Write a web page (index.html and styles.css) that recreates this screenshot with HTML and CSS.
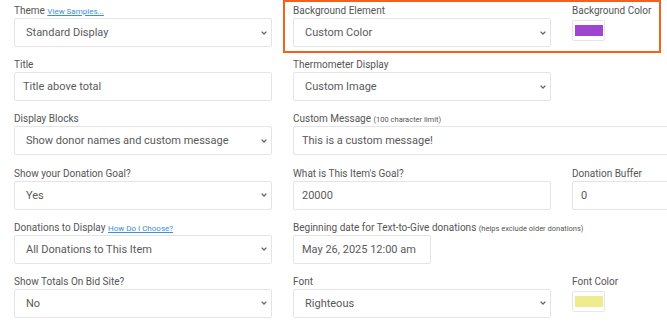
FILE: index.html
```html
<!DOCTYPE html>
<html>
<head>
    <meta charset="UTF-8">
    <meta name="viewport" content="width=device-width, initial-scale=1.0">
    <title>Thermometer Settings</title>
    <link rel="stylesheet" href="styles.css">
</head>
<body>
    <form class="settings">
        <!-- row 1 -->
        <div class="field">
            <label>Theme <a href="#">View Samples...</a></label>
            <div class="select"><span>Standard Display</span>
                <svg width="6" height="4" viewBox="0 0 6 4"><path d="M0.6 0.6 L3 3 L5.4 0.6" fill="none" stroke="#666" stroke-width="1.3"/></svg>
            </div>
        </div>
        <div class="highlight">
            <div class="field">
                <label>Background Element</label>
                <div class="select"><span>Custom Color</span>
                    <svg width="6" height="4" viewBox="0 0 6 4"><path d="M0.6 0.6 L3 3 L5.4 0.6" fill="none" stroke="#666" stroke-width="1.3"/></svg>
                </div>
            </div>
            <div class="field">
                <label>Background Color</label>
                <div class="swatch"><span class="swatch-fill purple"></span></div>
            </div>
        </div>

        <!-- row 2 -->
        <div class="field">
            <label>Title</label>
            <input type="text" value="Title above total">
        </div>
        <div class="field">
            <label>Thermometer Display</label>
            <div class="select"><span>Custom Image</span>
                <svg width="6" height="4" viewBox="0 0 6 4"><path d="M0.6 0.6 L3 3 L5.4 0.6" fill="none" stroke="#666" stroke-width="1.3"/></svg>
            </div>
        </div>
        <div class="field"></div>

        <!-- row 3 -->
        <div class="field">
            <label>Display Blocks</label>
            <div class="select"><span>Show donor names and custom message</span>
                <svg width="6" height="4" viewBox="0 0 6 4"><path d="M0.6 0.6 L3 3 L5.4 0.6" fill="none" stroke="#666" stroke-width="1.3"/></svg>
            </div>
        </div>
        <div class="field wide">
            <label>Custom Message <small>(100 character limit)</small></label>
            <input type="text" value="This is a custom message!">
        </div>

        <!-- row 4 -->
        <div class="field">
            <label>Show your Donation Goal?</label>
            <div class="select"><span>Yes</span>
                <svg width="6" height="4" viewBox="0 0 6 4"><path d="M0.6 0.6 L3 3 L5.4 0.6" fill="none" stroke="#666" stroke-width="1.3"/></svg>
            </div>
        </div>
        <div class="field">
            <label>What is This Item's Goal?</label>
            <input type="text" value="20000">
        </div>
        <div class="field">
            <label>Donation Buffer</label>
            <input type="text" value="0">
        </div>

        <!-- row 5 -->
        <div class="field">
            <label>Donations to Display <a href="#">How Do I Choose?</a></label>
            <div class="select"><span>All Donations to This Item</span>
                <svg width="6" height="4" viewBox="0 0 6 4"><path d="M0.6 0.6 L3 3 L5.4 0.6" fill="none" stroke="#666" stroke-width="1.3"/></svg>
            </div>
        </div>
        <div class="field wide">
            <label>Beginning date for Text-to-Give donations <small>(helps exclude older donations)</small></label>
            <input type="text" class="date" value="May 26, 2025 12:00 am">
        </div>

        <!-- row 6 -->
        <div class="field">
            <label>Show Totals On Bid Site?</label>
            <div class="select"><span>No</span>
                <svg width="6" height="4" viewBox="0 0 6 4"><path d="M0.6 0.6 L3 3 L5.4 0.6" fill="none" stroke="#666" stroke-width="1.3"/></svg>
            </div>
        </div>
        <div class="field">
            <label>Font</label>
            <div class="select"><span>Righteous</span>
                <svg width="6" height="4" viewBox="0 0 6 4"><path d="M0.6 0.6 L3 3 L5.4 0.6" fill="none" stroke="#666" stroke-width="1.3"/></svg>
            </div>
        </div>
        <div class="field">
            <label>Font Color</label>
            <div class="swatch"><span class="swatch-fill yellow"></span></div>
        </div>
    </form>
</body>
</html>
```

FILE: styles.css
```css
html {
    overflow: hidden;
}
body {
    margin: 0;
    padding: 0;
    background: white;
    font-family: Roboto, "Liberation Sans", Arial, sans-serif;
    color: #5a5a5a;
}
.settings {
    display: grid;
    grid-template-columns: 258px 258px 258px;
    grid-auto-rows: 43px;
    column-gap: 21px;
    row-gap: 11.2px;
    padding: 4px 0 0 14px;
    width: 830px;
}
.field {
    display: flex;
    flex-direction: column;
    min-width: 0;
}
.wide {
    grid-column: 2 / 4;
}
label {
    display: block;
    height: 14px;
    font-size: 10px;
    line-height: 14px;
    color: #555;
    white-space: nowrap;
}
label a {
    font-size: 8px;
    line-height: 0;
    color: #3d8fd9;
    text-decoration: underline;
}
label small {
    font-size: 7.5px;
    line-height: 0;
}
.select,
input {
    box-sizing: border-box;
    height: 29px;
    flex: none;
    border: 1px solid #e4e4e4;
    border-radius: 2px;
    background: white;
    font-family: inherit;
    font-size: 11px;
    color: #5a5a5a;
}
.select {
    display: flex;
    align-items: center;
    justify-content: space-between;
    padding: 0 4px 0 11px;
}
input {
    width: 100%;
    padding: 0 8px;
    margin: 0;
    outline: none;
}
input.date {
    width: 138px;
}
.swatch {
    box-sizing: border-box;
    width: 33px;
    height: 21px;
    margin-top: 2px;
    border: 1px solid #e6e6e6;
    border-radius: 2px;
    display: flex;
    align-items: center;
    justify-content: center;
}
.swatch-fill {
    width: 28px;
    height: 11px;
}
.purple {
    background: #9f45cf;
}
.yellow {
    background: #efec8e;
}
.highlight {
    grid-column: 2 / 4;
    display: grid;
    grid-template-columns: 258px 1fr;
    column-gap: 21px;
    width: 378px;
    box-sizing: border-box;
    margin: -4px 0 -6px -10px;
    padding: 2px 8px 4px 8px;
    border: 2px solid #f4611c;
}
```
